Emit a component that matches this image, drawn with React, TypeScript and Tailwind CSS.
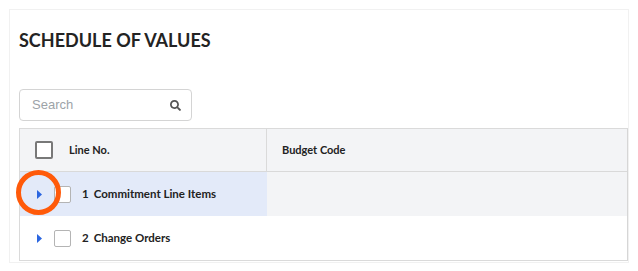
import React from "react";
import { FaSearch } from "react-icons/fa";

function Caret() {
  return (
    <svg width="5" height="9" viewBox="0 0 5 9" className="block">
      <path d="M0 0 L5 4.5 L0 9 Z" fill="#2b66e0" />
    </svg>
  );
}

export default function App() {
  return (
    <div
      className="relative w-[638px] h-[271px] overflow-hidden bg-white"
      style={{ fontFamily: "Lato, 'Noto Sans', sans-serif" }}
    >
      <div className="ml-[9px] mt-[9px] w-[620px] h-[254px] border border-[#f1f1f1] pl-[9px]">
        <h1 className="pt-[19px] text-[18px] leading-[22px] font-bold text-[#232323]">
          SCHEDULE OF VALUES
        </h1>
        <div className="mt-[38px] flex h-[32px] w-[173px] items-center justify-between rounded-[4px] border border-[#d4d4d4] pl-[12px] pr-[10px]">
          <span
            className="text-[13px] text-[#9da3a8]"
            style={{ fontFamily: "'Liberation Sans', Arial, sans-serif" }}
          >
            Search
          </span>
          <FaSearch className="h-[11px] w-[11px] text-[#555]" />
        </div>
        <div className="mt-[7px] border border-[#dadada] border-r-[#d6d6d6]">
          <div className="flex h-[43px] bg-[#f3f4f6] border-b border-[#d9d9d9]">
            <div className="flex w-[247px] items-center border-r border-[#dadada] pl-[15px]">
              <div className="h-[18px] w-[18px] rounded-[2px] border-2 border-[#787878] bg-white" />
              <span className="ml-[16px] text-[11px] font-bold text-[#222]">Line No.</span>
            </div>
            <div className="flex flex-1 items-center pl-[15px]">
              <span className="text-[11px] font-bold text-[#222]">Budget Code</span>
            </div>
          </div>
          <div className="flex h-[44px]">
            <div className="flex w-[247px] items-center bg-[#e3eaf9] pl-[17px]">
              <Caret />
              <div className="ml-[12px] h-[17px] w-[17px] rounded-[2px] border border-[#b4b4b4] bg-white" />
              <span className="ml-[11px] text-[11.5px] font-bold text-[#222]">1</span>
              <span className="ml-[5px] text-[11.5px] font-bold text-[#222]">Commitment Line Items</span>
            </div>
            <div className="flex-1 bg-[#f3f4f6]" />
          </div>
          <div className="flex h-[44px] bg-white">
            <div className="flex w-[247px] items-center pl-[17px]">
              <Caret />
              <div className="ml-[12px] h-[17px] w-[17px] rounded-[2px] border border-[#b4b4b4] bg-white" />
              <span className="ml-[11px] text-[11.5px] font-bold text-[#222]">2</span>
              <span className="ml-[5px] text-[11.5px] font-bold text-[#222]">Change Orders</span>
            </div>
            <div className="flex-1" />
          </div>
        </div>
      </div>
      <div className="absolute left-[16px] top-[170px] h-[45px] w-[45px] rounded-full border-[5px] border-[#ff5a0a]" />
    </div>
  );
}
